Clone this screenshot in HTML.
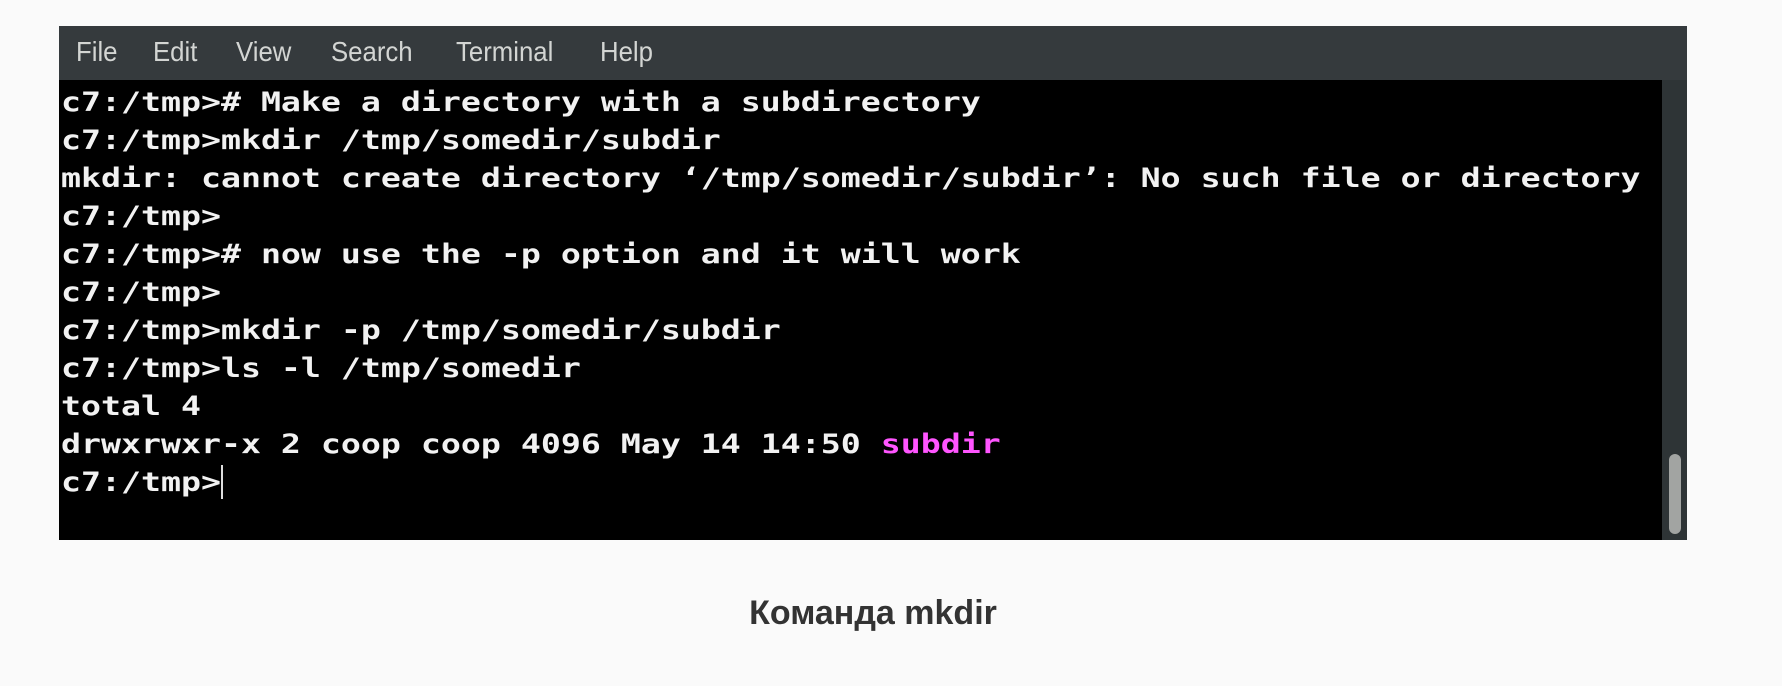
<!DOCTYPE html>
<html><head><meta charset="utf-8"><style>
html,body{margin:0;padding:0;background:#fafafa;width:1782px;height:686px;overflow:hidden;position:relative}
.term{position:absolute;left:59px;top:26px;width:1628px;height:514px;background:#2e3436}
.menu{position:absolute;left:0;top:0;width:1628px;height:54px;background:#353a3d;font-family:"Liberation Sans",sans-serif;font-size:28px;color:#d3d5d3}
.menu span{position:absolute;top:10px;transform:scaleX(0.92);transform-origin:0 0}
.scr{position:absolute;left:0;top:54px;width:1603px;height:460px;background:#000}
.sb{position:absolute;left:1603px;top:54px;width:25px;height:460px;background:#2e3436}
.thumb{position:absolute;left:1669px;top:454px;width:12px;height:80px;border-radius:6px;background:#a2a4a2}
.line{position:absolute;left:61px;font-family:"DejaVu Sans Mono",monospace;font-weight:bold;font-size:27px;color:#f2f2f2;white-space:pre;transform:scaleX(1.23);transform-origin:0 0;line-height:1}
.m{color:#ff55ff}
.cur{position:absolute;left:221px;top:465px;width:2px;height:34px;background:#ddd}
.cap{position:absolute;left:0;width:1746px;top:594px;text-align:center;font-family:"Liberation Sans",sans-serif;font-weight:bold;font-size:34px;color:#333}
</style></head><body>
<div class="term">
<div class="menu"><span style="left:17px">File</span><span style="left:94px">Edit</span><span style="left:177px">View</span><span style="left:272px">Search</span><span style="left:397px">Terminal</span><span style="left:541px">Help</span></div>
<div class="scr"></div><div class="sb"></div>
</div>
<div class="thumb"></div>
<div class="line" style="top:89px">c7:/tmp&gt;# Make a directory with a subdirectory</div>
<div class="line" style="top:127px">c7:/tmp&gt;mkdir /tmp/somedir/subdir</div>
<div class="line" style="top:165px">mkdir: cannot create directory ‘/tmp/somedir/subdir’: No such file or directory</div>
<div class="line" style="top:203px">c7:/tmp&gt;</div>
<div class="line" style="top:241px">c7:/tmp&gt;# now use the -p option and it will work</div>
<div class="line" style="top:279px">c7:/tmp&gt;</div>
<div class="line" style="top:317px">c7:/tmp&gt;mkdir -p /tmp/somedir/subdir</div>
<div class="line" style="top:355px">c7:/tmp&gt;ls -l /tmp/somedir</div>
<div class="line" style="top:393px">total 4</div>
<div class="line" style="top:431px">drwxrwxr-x 2 coop coop 4096 May 14 14:50 <span class="m">subdir</span></div>
<div class="line" style="top:469px">c7:/tmp&gt;</div>
<div class="cur"></div>
<div class="cap">Команда mkdir</div>
</body></html>
